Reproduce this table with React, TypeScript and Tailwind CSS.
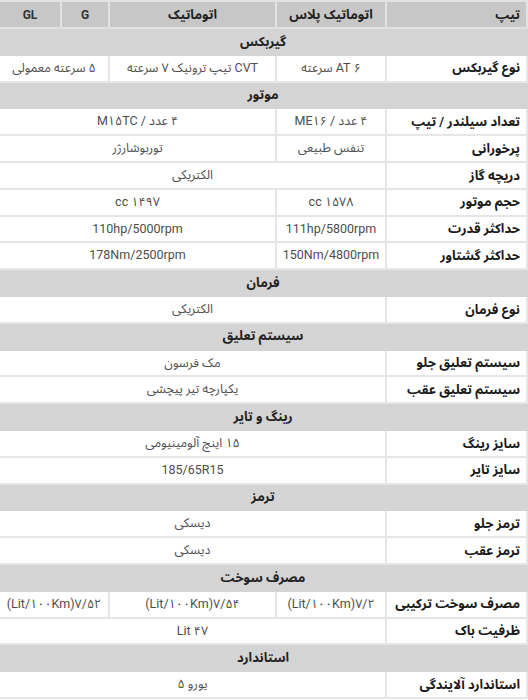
import React from "react";

type Cell = { text: string; span?: number; ltr?: boolean };
type Row =
  | { kind: "section"; title: string }
  | { kind: "data"; label: string; cells: Cell[] };

const rows: Row[] = [
  { kind: "section", title: "گیربکس" },
  {
    kind: "data",
    label: "نوع گیربکس",
    cells: [
      { text: "۶ AT سرعته" },
      { text: "CVT تیپ ترونیک ۷ سرعته" },
      { text: "۵ سرعته معمولی", span: 2 },
    ],
  },
  { kind: "section", title: "موتور" },
  {
    kind: "data",
    label: "تعداد سیلندر / تیپ",
    cells: [{ text: "۴ عدد / ME۱۶" }, { text: "۴ عدد / M۱۵TC", span: 3 }],
  },
  {
    kind: "data",
    label: "پرخورانی",
    cells: [{ text: "تنفس طبیعی" }, { text: "توربوشارژر", span: 3 }],
  },
  { kind: "data", label: "دریچه گاز", cells: [{ text: "الکتریکی", span: 4 }] },
  {
    kind: "data",
    label: "حجم موتور",
    cells: [{ text: "۱۵۷۸ cc" }, { text: "۱۴۹۷ cc", span: 3 }],
  },
  {
    kind: "data",
    label: "حداکثر قدرت",
    cells: [{ text: "111hp/5800rpm", ltr: true }, { text: "110hp/5000rpm", span: 3, ltr: true }],
  },
  {
    kind: "data",
    label: "حداکثر گشتاور",
    cells: [{ text: "150Nm/4800rpm", ltr: true }, { text: "178Nm/2500rpm", span: 3, ltr: true }],
  },
  { kind: "section", title: "فرمان" },
  { kind: "data", label: "نوع فرمان", cells: [{ text: "الکتریکی", span: 4 }] },
  { kind: "section", title: "سیستم تعلیق" },
  { kind: "data", label: "سیستم تعلیق جلو", cells: [{ text: "مک فرسون", span: 4 }] },
  { kind: "data", label: "سیستم تعلیق عقب", cells: [{ text: "یکپارچه تیر پیچشی", span: 4 }] },
  { kind: "section", title: "رینگ و تایر" },
  { kind: "data", label: "سایز رینگ", cells: [{ text: "۱۵ اینچ آلومینیومی", span: 4 }] },
  { kind: "data", label: "سایز تایر", cells: [{ text: "185/65R15", span: 4, ltr: true }] },
  { kind: "section", title: "ترمز" },
  { kind: "data", label: "ترمز جلو", cells: [{ text: "دیسکی", span: 4 }] },
  { kind: "data", label: "ترمز عقب", cells: [{ text: "دیسکی", span: 4 }] },
  { kind: "section", title: "مصرف سوخت" },
  {
    kind: "data",
    label: "مصرف سوخت ترکیبی",
    cells: [
      { text: "(Lit/۱۰۰Km)۷/۲", ltr: true },
      { text: "(Lit/۱۰۰Km)۷/۵۴", ltr: true },
      { text: "(Lit/۱۰۰Km)۷/۵۲", span: 2, ltr: true },
    ],
  },
  { kind: "data", label: "ظرفیت باک", cells: [{ text: "۴۷ Lit", span: 4 }] },
  { kind: "section", title: "استاندارد" },
  { kind: "data", label: "استاندارد آلایندگی", cells: [{ text: "یورو ۵", span: 4 }] },
];

const font = {
  fontFamily: "Roboto, 'Noto Sans Arabic', 'DejaVu Sans', sans-serif",
};

export default function App() {
  return (
    <div dir="rtl" className="w-[528px] bg-white" style={font}>
      <table className="w-[528px] table-fixed border-collapse">
        <colgroup>
          <col className="w-[141px]" />
          <col className="w-[110px]" />
          <col className="w-[167px]" />
          <col className="w-[48px]" />
          <col className="w-[62px]" />
        </colgroup>
        <thead>
          <tr className="h-[27px] bg-[#c7c7c7]">
            <th className="border-2 border-[#e2e2e2] px-[6px] text-right text-[13px] font-bold text-[#222]">
              تیپ
            </th>
            <th className="border-2 border-[#e2e2e2] text-center text-[13px] font-bold text-[#222]">
              اتوماتیک پلاس
            </th>
            <th className="border-2 border-[#e2e2e2] text-center text-[13px] font-bold text-[#222]">
              اتوماتیک
            </th>
            <th className="border-2 border-[#e2e2e2] text-center text-[12px] font-bold text-[#333]">
              G
            </th>
            <th className="border-2 border-[#e2e2e2] text-center text-[12px] font-bold text-[#333]">
              GL
            </th>
          </tr>
        </thead>
        <tbody>
          {rows.map((r, i) =>
            r.kind === "section" ? (
              <tr key={i} className="h-[26.8px] bg-[#d4d4d4]">
                <td
                  colSpan={5}
                  className="border-2 border-[#d4d4d4] text-center text-[13px] font-bold text-[#222]"
                >
                  {r.title}
                </td>
              </tr>
            ) : (
              <tr key={i} className="h-[26.8px] bg-white">
                <td className="border-2 border-[#e6e6e6] px-[6px] text-right text-[13px] font-bold text-[#1a1a1a]">
                  {r.label}
                </td>
                {r.cells.map((c, j) => (
                  <td
                    key={j}
                    colSpan={c.span ?? 1}
                    className="border-2 border-[#e6e6e6] text-center text-[12.5px] text-[#4d4d4d]"
                  >
                    {c.ltr ? <span dir="ltr">{c.text}</span> : c.text}
                  </td>
                ))}
              </tr>
            )
          )}
        </tbody>
      </table>
    </div>
  );
}
